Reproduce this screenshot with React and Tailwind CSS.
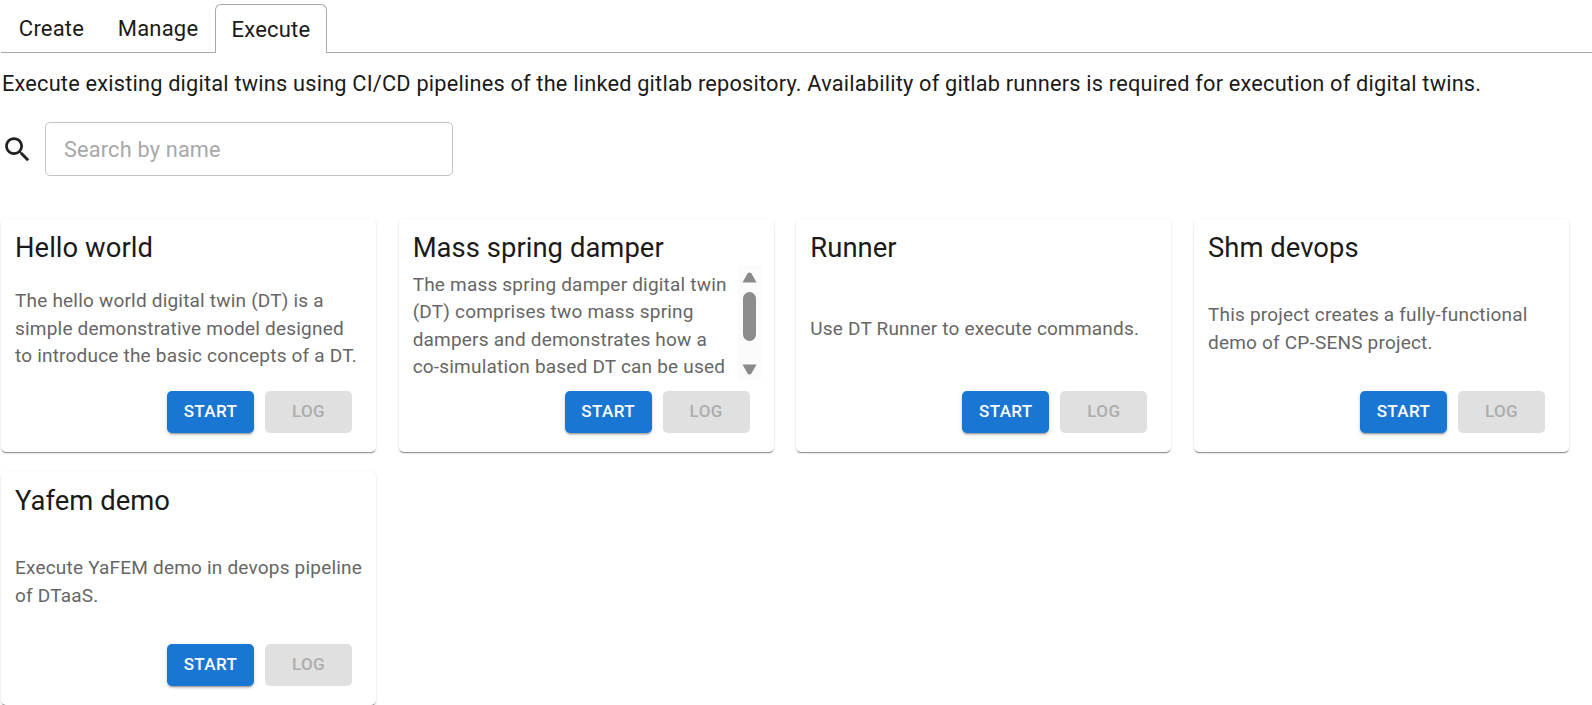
import React from 'react';

const twins = [
  {
    name: 'Hello world',
    text: 'The hello world digital twin (DT) is a simple demonstrative model designed to introduce the basic concepts of a DT.',
  },
  {
    name: 'Mass spring damper',
    text: 'The mass spring damper digital twin (DT) comprises two mass spring dampers and demonstrates how a co-simulation based DT can be used to study the coupled behaviour of the system.',
    scroll: true,
  },
  { name: 'Runner', text: 'Use DT Runner to execute commands.' },
  { name: 'Shm devops', text: 'This project creates a fully-functional demo of CP-SENS project.' },
  { name: 'Yafem demo', text: 'Execute YaFEM demo in devops pipeline of DTaaS.' },
];

const SearchIcon = () => (
  <svg width="33" height="33" viewBox="0 0 24 24" className="shrink-0" fill="#212121">
    <path d="M15.5 14h-.79l-.28-.27C15.41 12.59 16 11.11 16 9.5 16 5.91 13.09 3 9.5 3S3 5.91 3 9.5 5.91 16 9.5 16c1.61 0 3.09-.59 4.23-1.57l.27.28v.79l5 4.99L20.49 19l-4.99-5zm-6 0C7.01 14 5 11.99 5 9.5S7.01 5 9.5 5 14 7.01 14 9.5 11.99 14 9.5 14z" />
  </svg>
);

const Scrollbar = () => (
  <div className="flex h-[115px] w-[23px] shrink-0 flex-col items-center bg-[#fbfbfb]">
    <svg width="15" height="11" viewBox="0 0 15 11" className="mt-[7px] shrink-0">
      <path d="M0.5 10.5 L5.5 1.5 Q7.5 -0.5 9.5 1.5 L14.5 10.5 Z" fill="#8a8a8a" />
    </svg>
    <div className="mt-[9px] h-[49px] w-[13px] shrink-0 rounded-[7px] bg-[#8c8c8c]" />
    <svg width="15" height="11" viewBox="0 0 15 11" className="mt-[23px] shrink-0">
      <path d="M0.5 0.5 L5.5 9.5 Q7.5 11.5 9.5 9.5 L14.5 0.5 Z" fill="#8a8a8a" />
    </svg>
  </div>
);

const TwinCard = ({ twin }) => (
  <div className="flex h-[233px] flex-col rounded-[5px] bg-white pl-[14px] shadow-[0_2px_1px_-1px_rgba(0,0,0,0.3),0_1px_1px_0_rgba(0,0,0,0.14),0_1px_3px_0_rgba(0,0,0,0.12)]">
    <h2 className="mt-[9px] text-[27.4px] leading-[40px] font-normal tracking-[0.05px] text-[#1a1a1a]">{twin.name}</h2>
    {twin.scroll ? (
      <div className="mt-[-3px] flex items-start pr-[13px]">
        <p className="h-[115px] flex-1 overflow-hidden pt-[6px] pr-[10px] text-[19px] leading-[27.4px] tracking-[0.2px] text-[#666666]">
          {twin.text}
        </p>
        <Scrollbar />
      </div>
    ) : (
      <div className="flex h-[112px] items-center pt-[9px] pr-[12px]">
        <p className="text-[19px] leading-[27.4px] tracking-[0.2px] text-[#666666]">{twin.text}</p>
      </div>
    )}
    <div className="mt-[11px] flex justify-end gap-[11px] pr-[24px]">
      <button className="h-[42px] w-[87px] rounded-[5px] bg-[#1976d2] text-[17px] font-medium tracking-[0.4px] text-white shadow-[0_3px_1px_-2px_rgba(0,0,0,0.2),0_2px_2px_0_rgba(0,0,0,0.14),0_1px_5px_0_rgba(0,0,0,0.12)]">
        START
      </button>
      <button className="h-[42px] w-[87px] rounded-[5px] bg-[#e0e0e0] text-[17px] font-medium tracking-[0.4px] text-[#adadad]">
        LOG
      </button>
    </div>
  </div>
);

export default function App() {
  return (
    <div className="h-[705px] overflow-hidden bg-white font-['Roboto',sans-serif]">
      <div className="mt-[4px] ml-[1px] flex h-[49px] items-stretch border-b border-[#aaaaaa] pl-[1px]">
        <div className="flex w-[99px] items-center justify-center pt-[1px] text-[22px] tracking-[0.2px] text-[#1a1a1a]">Create</div>
        <div className="flex w-[114px] items-center justify-center pt-[1px] text-[22px] tracking-[0.2px] text-[#1a1a1a]">Manage</div>
        <div className="mb-[-1px] flex w-[112px] items-center justify-center rounded-t-[6px] border border-b-0 border-[#aaaaaa] bg-white pt-[1px] text-[22px] tracking-[0.2px] text-[#1a1a1a]">
          Execute
        </div>
      </div>
      <p className="mt-[17px] ml-[2px] text-[21.75px] leading-[28px] tracking-[0.2px] whitespace-nowrap text-[#1a1a1a]">
        Execute existing digital twins using CI/CD pipelines of the linked gitlab repository. Availability of gitlab runners is required for execution of digital twins.
      </p>
      <div className="mt-[24px] flex items-center pl-[1px]">
        <SearchIcon />
        <div className="ml-[11px] flex h-[54px] w-[408px] items-center rounded-[5px] border border-[#c4c4c4] px-[18px] pt-[2px] text-[21.7px] tracking-[0.2px] text-[#a8a8a8]">
          Search by name
        </div>
      </div>
      <div className="mt-[43px] ml-[1px] grid w-[1568px] grid-cols-4 gap-x-[22.67px] gap-y-[20px]">
        {twins.map((twin) => (
          <TwinCard key={twin.name} twin={twin} />
        ))}
      </div>
    </div>
  );
}
